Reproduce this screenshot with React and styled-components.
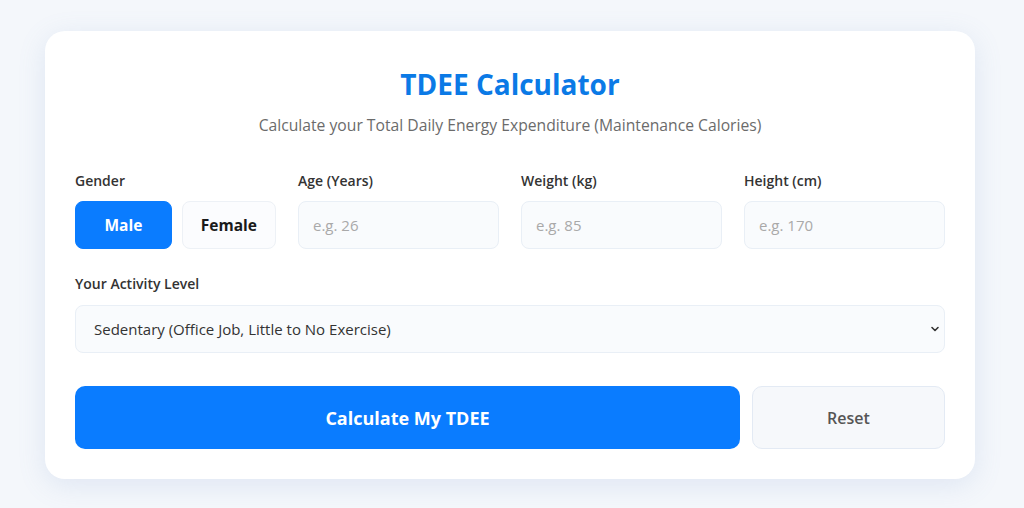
import React, { useState } from "react";
import styled, { createGlobalStyle } from "styled-components";

const Global = createGlobalStyle`
  * { box-sizing: border-box; }
  html, body { margin: 0; padding: 0; }
  body {
    background: #f4f7fb;
    font-family: "Open Sans", "Noto Sans", Arial, sans-serif;
    color: #333;
  }
`;

const Page = styled.div`
  min-height: 508px;
  padding: 31px 49px 30px 45px;
  display: flex;
  justify-content: center;
  align-items: flex-start;
`;

const Card = styled.div`
  width: 930px;
  background: #ffffff;
  border-radius: 20px;
  box-shadow: 0 6px 28px rgba(110, 145, 200, 0.16);
  padding: 34px 30px 30px;
  display: flex;
  flex-direction: column;
`;

const Title = styled.h1`
  margin: 0;
  text-align: center;
  color: #0b7ae6;
  font-size: 28px;
  font-weight: 700;
  line-height: 38px;
`;

const Subtitle = styled.p`
  margin: 11px 0 0;
  text-align: center;
  color: #6b6b6b;
  font-size: 15.7px;
  line-height: 22px;
`;

const Grid = styled.div`
  margin-top: 35px;
  display: grid;
  grid-template-columns: repeat(4, 1fr);
  column-gap: 22px;
`;

const Field = styled.div`
  display: flex;
  flex-direction: column;
`;

const Label = styled.label`
  font-size: 14px;
  font-weight: 600;
  color: #333;
  line-height: 20px;
  margin-bottom: ${(p) => (p.$gap ? p.$gap : 10)}px;
`;

const GenderRow = styled.div`
  display: flex;
  gap: 10px;
`;

const GenderButton = styled.button`
  height: 48px;
  flex: ${(p) => (p.$grow ? p.$grow : 1)};
  border-radius: 8px;
  font-family: inherit;
  font-size: 15.5px;
  font-weight: 700;
  cursor: pointer;
  border: 1px solid ${(p) => (p.$active ? "#0a7cff" : "#edf1f6")};
  background: ${(p) => (p.$active ? "#0a7cff" : "#fbfcfe")};
  color: ${(p) => (p.$active ? "#ffffff" : "#1a1a1a")};
`;

const Input = styled.input`
  height: 48px;
  width: 100%;
  border-radius: 8px;
  border: 1px solid #e9eff6;
  background: #f9fbfd;
  padding: 0 14px;
  font-family: inherit;
  font-size: 15px;
  color: #333;
  outline: none;
  &::placeholder { color: #a9a9a9; }
`;

const ActivityField = styled(Field)`
  margin-top: 25px;
`;

const SelectWrap = styled.div`
  position: relative;
`;

const Select = styled.select`
  appearance: none;
  width: 100%;
  height: 48px;
  border-radius: 8px;
  border: 1px solid #e9eff6;
  background: #f9fbfd;
  padding: 0 18px;
  font-family: inherit;
  font-size: 15px;
  color: #333;
  outline: none;
`;

const Chevron = styled.svg`
  position: absolute;
  right: 5px;
  top: 50%;
  transform: translateY(-50%);
  pointer-events: none;
`;

const Actions = styled.div`
  margin-top: 33px;
  display: flex;
  gap: 12px;
`;

const PrimaryButton = styled.button`
  flex: 1;
  height: 63px;
  border: none;
  border-radius: 10px;
  background: #0a7cff;
  color: #fff;
  font-family: inherit;
  font-size: 18px;
  font-weight: 700;
  cursor: pointer;
`;

const SecondaryButton = styled.button`
  width: 193px;
  height: 63px;
  border-radius: 10px;
  border: 1.5px solid #e3eaf4;
  background: #f6f8fb;
  color: #555;
  font-family: inherit;
  font-size: 16px;
  font-weight: 600;
  cursor: pointer;
`;

export default function App() {
  const [gender, setGender] = useState("male");
  return (
    <>
      <Global />
      <Page>
        <Card>
          <Title>TDEE Calculator</Title>
          <Subtitle>Calculate your Total Daily Energy Expenditure (Maintenance Calories)</Subtitle>
          <Grid>
            <Field>
              <Label>Gender</Label>
              <GenderRow>
                <GenderButton $active={gender === "male"} $grow={97} onClick={() => setGender("male")}>Male</GenderButton>
                <GenderButton $active={gender === "female"} $grow={94} onClick={() => setGender("female")}>Female</GenderButton>
              </GenderRow>
            </Field>
            <Field>
              <Label>Age (Years)</Label>
              <Input placeholder="e.g. 26" />
            </Field>
            <Field>
              <Label>Weight (kg)</Label>
              <Input placeholder="e.g. 85" />
            </Field>
            <Field>
              <Label>Height (cm)</Label>
              <Input placeholder="e.g. 170" />
            </Field>
          </Grid>
          <ActivityField>
            <Label $gap={11}>Your Activity Level</Label>
            <SelectWrap>
              <Select defaultValue="sedentary">
                <option value="sedentary">Sedentary (Office Job, Little to No Exercise)</option>
                <option value="light">Lightly Active (1-3 Days/Week)</option>
                <option value="moderate">Moderately Active (3-5 Days/Week)</option>
                <option value="very">Very Active (6-7 Days/Week)</option>
              </Select>
              <Chevron width="10" height="10" viewBox="0 0 10 10">
                <path d="M2 3.5 L5 6.5 L8 3.5" fill="none" stroke="#333" strokeWidth="1.6" strokeLinecap="round" strokeLinejoin="round" />
              </Chevron>
            </SelectWrap>
          </ActivityField>
          <Actions>
            <PrimaryButton>Calculate My TDEE</PrimaryButton>
            <SecondaryButton>Reset</SecondaryButton>
          </Actions>
        </Card>
      </Page>
    </>
  );
}
